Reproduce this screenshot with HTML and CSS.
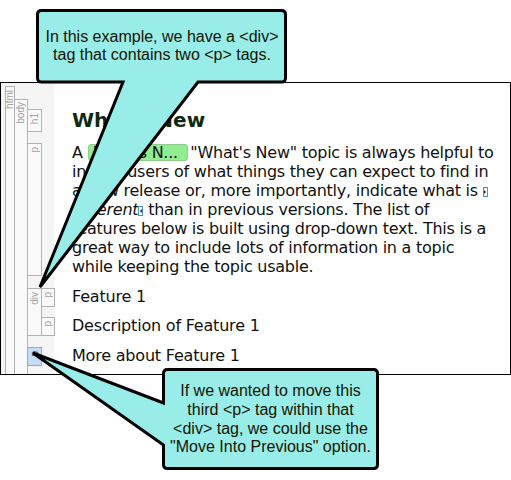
FILE: index.html
```html
<!DOCTYPE html>
<html>
<head>
<meta charset="utf-8">
<link rel="stylesheet" href="styles.css">
</head>
<body>
<div class="page">
  <div class="frame">
    <div class="node">
      <div class="tag t-html"><span>html</span></div>
      <div class="kids kids-html">
        <div class="node">
          <div class="tag t-body"><span>body</span></div>
          <div class="kids kids-body">
            <div class="row r-h1">
              <div class="tag t3"><span>h1</span></div>
              <div class="spacer"></div>
              <h1 class="content heading">What's New</h1>
            </div>
            <div class="row r-p1">
              <div class="tag t3"><span>p</span></div>
              <div class="spacer"></div>
              <p class="content para">A <span class="var">What's N...</span> "What's New" topic is always helpful to<br>inform users of what things they can expect to find in<br>a new release or, more importantly, indicate what is <span class="mk mk-start"></span><br><em>different</em><span class="mk mk-end"></span> than in previous versions. The list of<br>features below is built using drop-down text. This is a<br>great way to include lots of information in a topic<br>while keeping the topic usable.</p>
            </div>
            <div class="row r-div">
              <div class="tag t3"><span>div</span></div>
              <div class="kids kids-div">
                <div class="row single">
                  <div class="tag t4"><span>p</span></div>
                  <p class="content line">Feature 1</p>
                </div>
                <div class="row single r-gap">
                  <div class="tag t4"><span>p</span></div>
                  <p class="content line">Description of Feature 1</p>
                </div>
              </div>
            </div>
            <div class="row single r-last">
              <div class="tag t3 sel"><span>p</span></div>
              <div class="spacer"></div>
              <p class="content line">More about Feature 1</p>
            </div>
          </div>
        </div>
      </div>
    </div>
  </div>

  <svg class="callouts" width="511" height="480" viewBox="0 0 511 480">
    <path class="bubble" d="M41.5 10.5 H281.5 Q285.5 10.5 285.5 14.5 V78 Q285.5 82 281.5 82 H198 L40 287 L123 82 H41.5 Q37.5 82 37.5 78 V14.5 Q37.5 10.5 41.5 10.5 Z"/>
    <path class="bubble" d="M167.5 369.5 H373.5 Q377.5 369.5 377.5 373.5 V464.5 Q377.5 468.5 373.5 468.5 H167.5 Q163.5 468.5 163.5 464.5 V445 L33 353 L163.5 403 V373.5 Q163.5 369.5 167.5 369.5 Z"/>
  </svg>
  <div class="note note-1">In this example, we have a &lt;div&gt;<br>tag that contains two &lt;p&gt; tags.</div>
  <div class="note note-2">If we wanted to move this<br>third &lt;p&gt; tag within that<br>&lt;div&gt; tag, we could use the<br>"Move Into Previous" option.</div>
</div>
</body>
</html>
```

FILE: styles.css
```css
* { box-sizing: border-box; }

html, body {
  margin: 0;
  padding: 0;
  background: #fff;
}

.page {
  position: relative;
  width: 511px;
  height: 480px;
  padding-top: 82px;
  overflow: hidden;
}

.frame {
  width: 511px;
  height: 293px;
  border: 1px solid #000;
  display: flex;
  padding-left: 4px;
  background: linear-gradient(to right, #f5f5f5 53px, #fff 53px);
  overflow: hidden;
}

.node {
  display: flex;
  flex: 1;
  min-width: 0;
}

.frame > .node { margin-top: 3px; }

.kids {
  display: flex;
  flex-direction: column;
  flex: 1;
  min-width: 0;
}

.kids-html { padding-top: 13px; }
.kids-body { padding-top: 10px; }

.tag {
  flex: none;
  border: 1px solid #b2b2b2;
  background: #f9f9f9;
  margin-right: -1px;
  display: flex;
  flex-direction: column;
  align-items: center;
  position: relative;
}

.tag span {
  writing-mode: vertical-rl;
  transform: rotate(180deg);
  font-family: "Liberation Sans", Arial, sans-serif;
  font-size: 10px;
  line-height: 10px;
  color: #a2a2a2;
  margin-top: 3px;
  white-space: nowrap;
}

.t-html { width: 10px; border-bottom: none; }
.t-body { width: 14px; border-bottom: none; }
.t3 { width: 15px; }
.t4 { width: 14px; }

.t-body span { margin-top: 2px; }

.tag.sel {
  background: #c4dcf6;
  border-color: #9aa9bd;
}
.tag.sel span { color: #405070; }

.spacer {
  flex: none;
  width: 13px;
}

.row {
  display: flex;
  align-items: stretch;
}

.r-h1 { height: 23px; }
.r-p1 { height: 133px; margin-top: 11px; }
.r-div { margin-top: 12px; }
.single { height: 19px; }
.r-gap { margin-top: 10px; }
.r-last { margin-top: 11px; }

.content {
  margin: 0;
  padding-left: 18px;
  font-family: "DejaVu Sans", Verdana, sans-serif;
  color: #111;
  white-space: nowrap;
}

.heading {
  font-size: 20px;
  line-height: 23px;
  font-weight: bold;
  color: #112811;
}

.para {
  font-size: 16px;
  line-height: 19px;
  letter-spacing: -0.25px;
}

.line {
  font-size: 16px;
  line-height: 17px;
  letter-spacing: -0.2px;
}

.var {
  display: inline-block;
  width: 100px;
  height: 17px;
  line-height: 16px;
  padding-left: 5px;
  margin-right: -2px;
  background: #90ee90;
  border: 1px solid #8ccc8c;
  border-radius: 3px;
  vertical-align: -3px;
  overflow: hidden;
}

.mk {
  display: inline-block;
  width: 5px;
  height: 10px;
  border: 1px solid #4b8fd6;
  vertical-align: -1px;
  position: relative;
}

.mk::after {
  content: "";
  position: absolute;
  top: 2px;
  border-top: 2px solid transparent;
  border-bottom: 2px solid transparent;
}

.mk-start::after {
  left: 0;
  border-left: 2px solid #222;
}

.mk-end::after {
  right: 0;
  border-right: 2px solid #222;
}

.callouts {
  position: absolute;
  left: 0;
  top: 0;
  pointer-events: none;
}

.bubble {
  fill: #99ede9;
  stroke: #000;
  stroke-width: 3;
  stroke-linejoin: miter;
}

.note {
  position: absolute;
  font-family: "Liberation Sans", Arial, sans-serif;
  font-size: 16px;
  color: #141400;
  text-align: center;
}

.note-1 {
  left: 37px;
  top: 28px;
  width: 250px;
  line-height: 18px;
}

.note-2 {
  left: 162px;
  top: 382px;
  width: 217px;
  line-height: 18.8px;
}
```
